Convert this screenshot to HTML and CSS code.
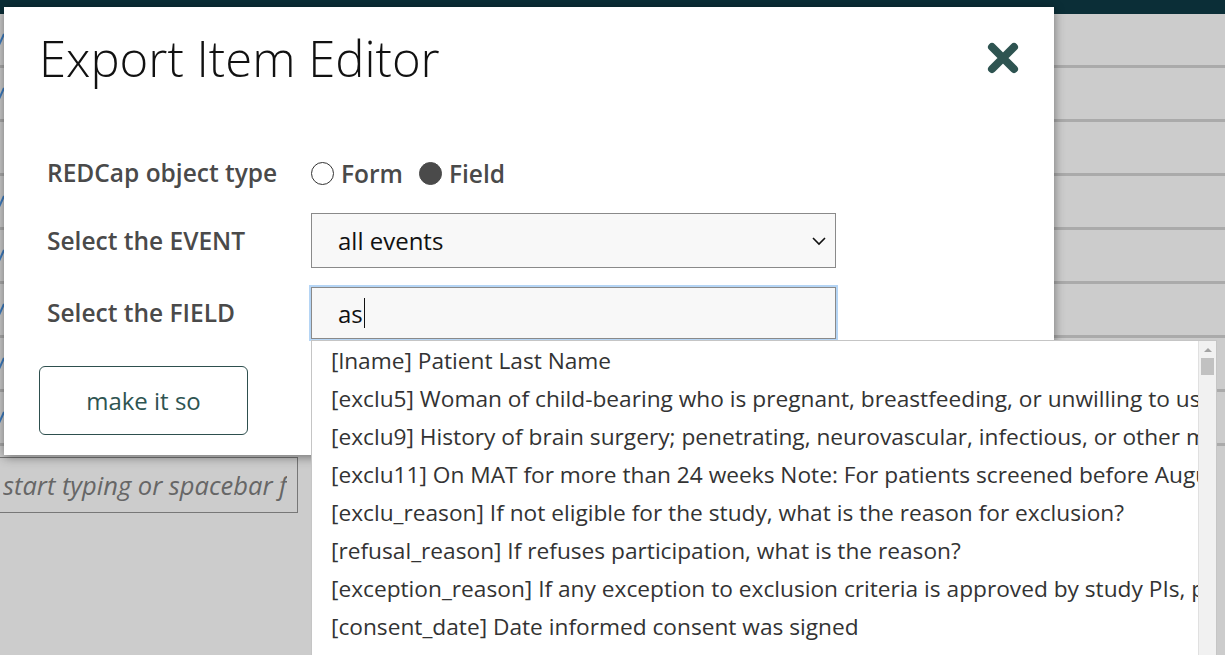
FILE: index.html
```html
<!DOCTYPE html>
<html>
<head>
<meta charset="utf-8">
<link rel="stylesheet" href="styles.css">
</head>
<body>
<div class="topbar"></div>
<div class="table">
  <div class="trow"><svg class="check" width="6" height="14" viewBox="0 0 6 14"><path d="M0 12 L5 1" stroke="#3d7cc0" stroke-width="2" fill="none"/></svg></div>
  <div class="trow"><svg class="check" width="6" height="14" viewBox="0 0 6 14"><path d="M0 12 L5 1" stroke="#3d7cc0" stroke-width="2" fill="none"/></svg></div>
  <div class="trow"></div>
  <div class="trow"><svg class="check" width="6" height="14" viewBox="0 0 6 14"><path d="M0 12 L5 1" stroke="#3d7cc0" stroke-width="2" fill="none"/></svg></div>
  <div class="trow"><svg class="check" width="6" height="14" viewBox="0 0 6 14"><path d="M0 12 L5 1" stroke="#3d7cc0" stroke-width="2" fill="none"/></svg></div>
  <div class="trow"><svg class="check" width="6" height="14" viewBox="0 0 6 14"><path d="M0 12 L5 1" stroke="#3d7cc0" stroke-width="2" fill="none"/></svg></div>
  <div class="trow"><svg class="check" width="6" height="14" viewBox="0 0 6 14"><path d="M0 12 L5 1" stroke="#3d7cc0" stroke-width="2" fill="none"/></svg></div>
  <div class="trow"><svg class="check" width="6" height="14" viewBox="0 0 6 14"><path d="M0 12 L5 1" stroke="#3d7cc0" stroke-width="2" fill="none"/></svg></div>
</div>
<div class="bg-search"><input class="bg-input" type="text" placeholder="start typing or spacebar for a list"></div>

<div class="modal">
  <div class="modal-head">
    <h1 class="modal-title">Export Item Editor</h1>
    <svg class="close" width="32" height="32" viewBox="0 0 32 32"><path d="M5 5 L27 27 M27 5 L5 27" stroke="#2e5451" stroke-width="8" stroke-linecap="round" fill="none"/></svg>
  </div>
  <div class="form">
    <div class="frow frow-radio">
      <label class="flabel">REDCap object type</label>
      <div class="radios">
        <label class="ropt"><input type="radio" name="t" class="radio"><span>Form</span></label>
        <label class="ropt"><input type="radio" name="t" class="radio" checked><span>Field</span></label>
      </div>
    </div>
    <div class="frow frow-select">
      <label class="flabel">Select the EVENT</label>
      <div class="select"><span>all events</span>
        <svg width="16" height="10" viewBox="0 0 16 10"><path d="M2 2 L8 8 L14 2" stroke="#111" stroke-width="1.6" fill="none"/></svg>
      </div>
    </div>
    <div class="frow frow-input">
      <label class="flabel">Select the FIELD</label>
      <div class="field-input"><span>as</span><span class="caret"></span></div>
    </div>
  </div>
  <button class="go">make it so</button>
</div>

<div class="menu">
  <ul class="menu-list">
    <li>[lname] Patient Last Name</li>
    <li>[exclu5] Woman of child-bearing who is pregnant, breastfeeding, or unwilling to use effective contraception</li>
    <li>[exclu9] History of brain surgery; penetrating, neurovascular, infectious, or other medical condition</li>
    <li>[exclu11] On MAT for more than 24 weeks Note: For patients screened before August 2019</li>
    <li>[exclu_reason] If not eligible for the study, what is the reason for exclusion?</li>
    <li>[refusal_reason] If refuses participation, what is the reason?</li>
    <li>[exception_reason] If any exception to exclusion criteria is approved by study PIs, please explain</li>
    <li>[consent_date] Date informed consent was signed</li>
    <li>[consent_time] Time informed consent was signed</li>
  </ul>
  <div class="scrollbar"><span class="arrow"></span><span class="thumb"></span></div>
</div>
</body>
</html>
```
FILE: styles.css
```css
html, body {
  margin: 0;
  padding: 0;
  height: 100%;
  overflow: hidden;
}
body {
  background: #cccccc;
  font-family: "Open Sans", "Liberation Sans", sans-serif;
  position: relative;
}
.topbar {
  height: 14px;
  background: #0b2e37;
}
.trow {
  height: 51px;
  border-bottom: 3px solid #aaaaaa;
  display: flex;
  align-items: center;
  overflow: hidden;
}
.check {
  display: block;
  margin-left: -1px;
}
.bg-search {
  margin-top: 11px;
  width: 298px;
  height: 56px;
  box-sizing: border-box;
  border: 1px solid #777;
  border-left: none;
  overflow: hidden;
}
.bg-input {
  display: block;
  width: 287px;
  height: 54px;
  box-sizing: border-box;
  border: none;
  background: transparent;
  padding: 0 0 0 3px;
  font-family: "Open Sans", sans-serif;
  font-size: 25.5px;
  font-style: italic;
  outline: none;
}
.bg-input::placeholder {
  color: #666;
  font-style: italic;
}

.modal {
  position: absolute;
  left: 4px;
  top: 7px;
  width: 1050px;
  height: 448px;
  background: #fff;
  box-shadow: 0 2px 10px rgba(0, 0, 0, 0.45);
  box-sizing: border-box;
  padding: 17px 35px 0 35px;
}
.modal-head {
  display: flex;
  justify-content: space-between;
  align-items: center;
}
.modal-title {
  margin: 0;
  font-family: "Open Sans", sans-serif;
  font-weight: 300;
  font-size: 49px;
  line-height: 68px;
  color: #111;
}
.close {
  display: block;
}
.form {
  margin-top: 63px;
  padding-left: 8px;
  display: flex;
  flex-direction: column;
}
.frow {
  display: flex;
  align-items: center;
}
.flabel {
  width: 264px;
  font-size: 24.5px;
  font-weight: 600;
  color: #4a4a4a;
  line-height: 34px;
}
.frow-radio { height: 36px; }
.frow-select { margin-top: 22px; }
.frow-input { margin-top: 19px; }
.radios {
  display: flex;
  gap: 16px;
}
.ropt {
  display: flex;
  align-items: center;
  gap: 7px;
  font-size: 24.5px;
  font-weight: 600;
  color: #4a4a4a;
}
.radio {
  appearance: none;
  -webkit-appearance: none;
  margin: 0;
  width: 23px;
  height: 23px;
  border-radius: 50%;
  border: 1px solid #333;
  background: #fff;
  box-sizing: border-box;
}
.radio:checked {
  background: #4a4a4a;
  border-color: #4a4a4a;
}
.select {
  width: 525px;
  height: 55px;
  box-sizing: border-box;
  border: 1px solid #8a8a8a;
  background: #f8f8f8;
  display: flex;
  align-items: center;
  justify-content: space-between;
  padding: 0 8px 0 26px;
  font-size: 24px;
  color: #111;
}
.field-input {
  width: 525px;
  height: 52px;
  box-sizing: border-box;
  border: 1px solid #8a8a8a;
  outline: 2px solid #b5d5f5;
  background: #f8f8f8;
  display: flex;
  align-items: center;
  padding-left: 26px;
  font-size: 24px;
  color: #111;
}
.caret {
  width: 1px;
  height: 30px;
  background: #111;
  margin-left: 1px;
}
.go {
  margin-top: 27px;
  width: 209px;
  height: 69px;
  border: 1px solid #2e4f4e;
  border-radius: 6px;
  background: #fff;
  font-family: "Open Sans", sans-serif;
  font-size: 24px;
  color: #2e5451;
  padding: 0;
}

.menu {
  position: absolute;
  left: 311px;
  top: 340px;
  width: 906px;
  height: 340px;
  background: #fff;
  border: 1px solid #c5c5c5;
  box-sizing: border-box;
  display: flex;
}
.menu-list {
  list-style: none;
  margin: 0;
  padding: 1px 0 0 0;
  flex: 1;
  min-width: 0;
  overflow: hidden;
}
.menu-list li {
  padding-left: 19px;
  font-size: 22.7px;
  line-height: 38px;
  color: #333;
  white-space: nowrap;
  overflow: hidden;
}
.scrollbar {
  width: 17px;
  background: #f1f1f1;
  border-left: 1px solid #e0e0e0;
  position: relative;
}
.arrow {
  position: absolute;
  left: 5px;
  top: 7px;
  width: 0;
  height: 0;
  border-left: 4px solid transparent;
  border-right: 4px solid transparent;
  border-bottom: 4px solid #a3a3a3;
}
.thumb {
  position: absolute;
  left: 2px;
  top: 17px;
  width: 13px;
  height: 17px;
  background: #c1c1c1;
}
```
